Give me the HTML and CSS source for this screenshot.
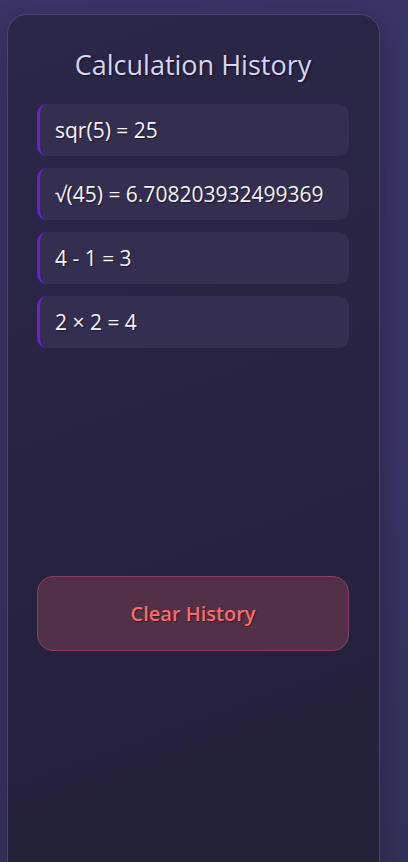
FILE: index.html
```html
<!DOCTYPE html>
<html>
<head>
<meta charset="utf-8">
<link rel="stylesheet" href="styles.css">
</head>
<body>
<div class="page">
  <aside class="panel">
    <h2 class="title">Calculation History</h2>
    <ul class="history">
      <li class="entry">sqr(5) = 25</li>
      <li class="entry">√(45) = 6.708203932499369</li>
      <li class="entry">4 - 1 = 3</li>
      <li class="entry">2 × 2 = 4</li>
    </ul>
    <button class="clear">Clear History</button>
  </aside>
</div>
</body>
</html>
```
FILE: styles.css
```css
html, body {
  margin: 0;
  padding: 0;
  height: 100%;
}
body {
  background: linear-gradient(135deg, #3c3468 0%, #3a3366 60%, #343058 100%);
  font-family: "Open Sans", "Noto Sans", sans-serif;
  overflow: hidden;
}
.page {
  padding: 14px 28px 0 7px;
  height: 100%;
  box-sizing: border-box;
}
.panel {
  background: linear-gradient(160deg, #2b2749 0%, #27233f 50%, #23203a 100%);
  border: 1px solid #4a4470;
  border-radius: 20px;
  height: 900px;
  box-sizing: border-box;
  padding: 31px 30px 0 29px;
  box-shadow: 0 8px 24px rgba(0,0,0,0.25);
}
.title {
  margin: 0 0 20px 0;
  text-align: center;
  font-weight: 400;
  font-size: 27px;
  line-height: 38px;
  color: #d9d5f2;
  text-shadow: 1px 1px 2px rgba(0,0,0,0.6);
}
.history {
  list-style: none;
  margin: 0;
  padding: 0;
  display: flex;
  flex-direction: column;
  gap: 12px;
  height: 472px;
}
.entry {
  height: 52px;
  box-sizing: border-box;
  display: flex;
  align-items: center;
  padding-left: 15px;
  background: #342f50;
  border-left: 3px solid #6b1fd6;
  border-radius: 10px;
  color: #f4f3fa;
  font-size: 21px;
  text-shadow: 1px 1px 1px rgba(0,0,0,0.5);
}
.clear {
  display: block;
  width: 100%;
  height: 75px;
  background: #523148;
  border: 1px solid #8b3e5c;
  border-radius: 16px;
  color: #ff6b6b;
  font-family: "Open Sans", "Noto Sans", sans-serif;
  font-size: 20px;
  font-weight: 600;
  text-shadow: 1px 1px 1px rgba(0,0,0,0.5);
}
```
